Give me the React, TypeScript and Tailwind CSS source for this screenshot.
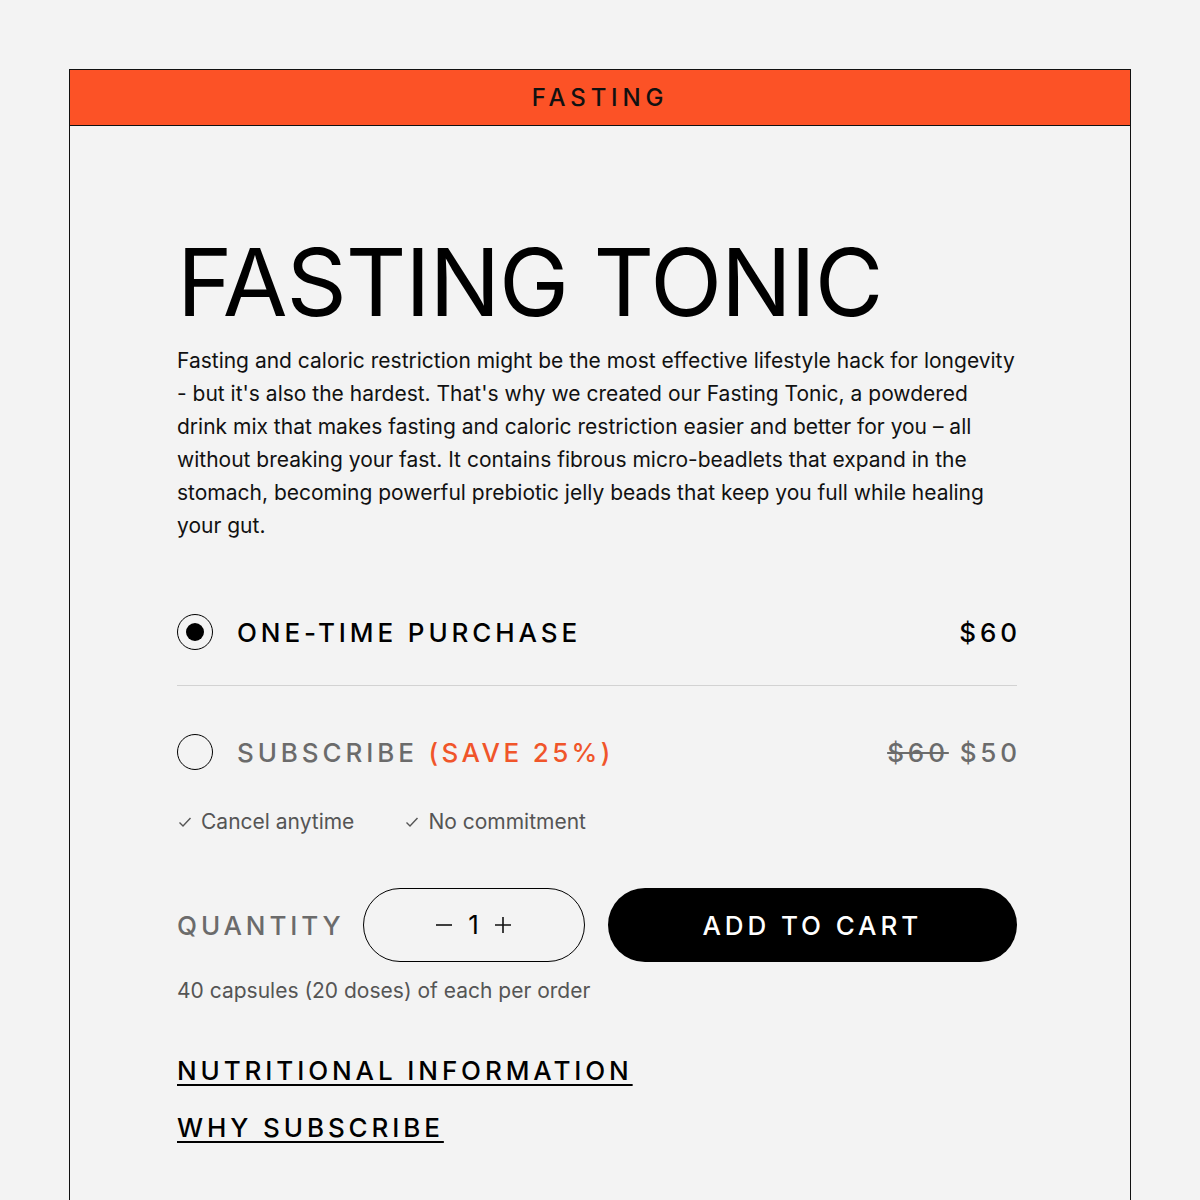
export default function App() {
  return (
    <div
      className="h-[1200px] overflow-hidden bg-[#f3f3f3] px-[69px] pt-[69px] text-[#111]"
      style={{ fontFamily: "Inter, 'Liberation Sans', sans-serif" }}
    >
      <div className="h-full border border-b-0 border-[#111]">
        {/* header band */}
        <div className="flex h-[56px] items-center justify-center border-b border-[#111] bg-[#fc5226]">
          <span className="text-[24px] font-medium tracking-[0.2em] text-[#111]">FASTING</span>
        </div>

        <div className="w-[947px] pl-[107px] pt-[109px]">
          <h1 className="text-[94px] leading-none font-normal tracking-[-0.012em] text-black">FASTING TONIC</h1>

          <p className="-mr-[6px] mt-[15px] text-[21px] leading-[33px] text-[#111]">
            Fasting and caloric restriction might be the most effective lifestyle hack for longevity - but
            it's also the hardest. That's why we created our Fasting Tonic, a powdered drink mix that makes
            fasting and caloric restriction easier and better for you – all without breaking your fast. It
            contains fibrous micro-beadlets that expand in the stomach, becoming powerful prebiotic jelly
            beads that keep you full while healing your gut.
          </p>

          {/* one-time */}
          <div className="mt-[72px] flex h-[36px] items-center">
            <div className="flex h-[36px] w-[36px] items-center justify-center rounded-full border-[1.5px] border-black">
              <div className="h-[18px] w-[18px] rounded-full bg-black" />
            </div>
            <span className="ml-[24px] text-[26px] font-medium tracking-[0.15em] text-black">ONE-TIME PURCHASE</span>
            <span className="-mr-[4px] ml-auto text-[26px] font-medium tracking-[0.15em] text-black">$60</span>
          </div>

          <div className="mt-[35px] h-px bg-[#d2d2d2]" />

          {/* subscribe */}
          <div className="mt-[48px] flex h-[36px] items-center">
            <div className="h-[36px] w-[36px] rounded-full border-[1.5px] border-black" />
            <span className="ml-[24px] text-[26px] font-medium tracking-[0.15em] text-[#6b6b6b]">
              SUBSCRIBE <span className="tracking-[0.13em] text-[#f0552a]">(SAVE 25%)</span>
            </span>
            <span className="-mr-[4px] ml-auto text-[26px] font-medium tracking-[0.15em] text-[#6b6b6b]">
              <span className="line-through">$60</span> $50
            </span>
          </div>

          <div className="mt-[38px] flex items-center gap-[50px] text-[21px] leading-[28px] text-[#555]">
            <span className="flex items-center gap-[8px]">
              <svg width="16" height="16" viewBox="0 0 16 16" fill="none" stroke="#555" strokeWidth="1.4">
                <path d="M2.5 8.5l3.5 3.5 7.5-8" />
              </svg>
              Cancel anytime
            </span>
            <span className="flex items-center gap-[8px]">
              <svg width="16" height="16" viewBox="0 0 16 16" fill="none" stroke="#555" strokeWidth="1.4">
                <path d="M2.5 8.5l3.5 3.5 7.5-8" />
              </svg>
              No commitment
            </span>
          </div>

          {/* quantity */}
          <div className="mt-[52px] flex items-center">
            <span className="text-[26px] font-medium tracking-[0.15em] text-[#6b6b6b]">QUANTITY</span>
            <div className="ml-[18px] flex h-[74px] w-[222px] items-center justify-center gap-[16px] rounded-full border-[1.5px] border-black text-[26px] text-black">
              <svg width="16" height="16" viewBox="0 0 16 16" stroke="#111" strokeWidth="1.6">
                <path d="M0 8h16" />
              </svg>
              <span className="leading-none">1</span>
              <svg width="16" height="16" viewBox="0 0 16 16" stroke="#111" strokeWidth="1.6">
                <path d="M0 8h16M8 0v16" />
              </svg>
            </div>
            <button className="ml-[23px] flex h-[74px] flex-1 items-center justify-center rounded-full bg-black text-[26px] font-medium tracking-[0.15em] text-white">
              ADD TO CART
            </button>
          </div>

          <p className="mt-[15px] text-[21px] leading-[28px] text-[#555]">40 capsules (20 doses) of each per order</p>

          <div className="mt-[50px] flex flex-col items-start gap-[25px]">
            <a className="text-[26px] leading-[32px] font-medium tracking-[0.15em] text-black underline decoration-2 underline-offset-[4px]">
              NUTRITIONAL INFORMATION
            </a>
            <a className="text-[26px] leading-[32px] font-medium tracking-[0.15em] text-black underline decoration-2 underline-offset-[4px]">
              WHY SUBSCRIBE
            </a>
          </div>
        </div>
      </div>
    </div>
  );
}
